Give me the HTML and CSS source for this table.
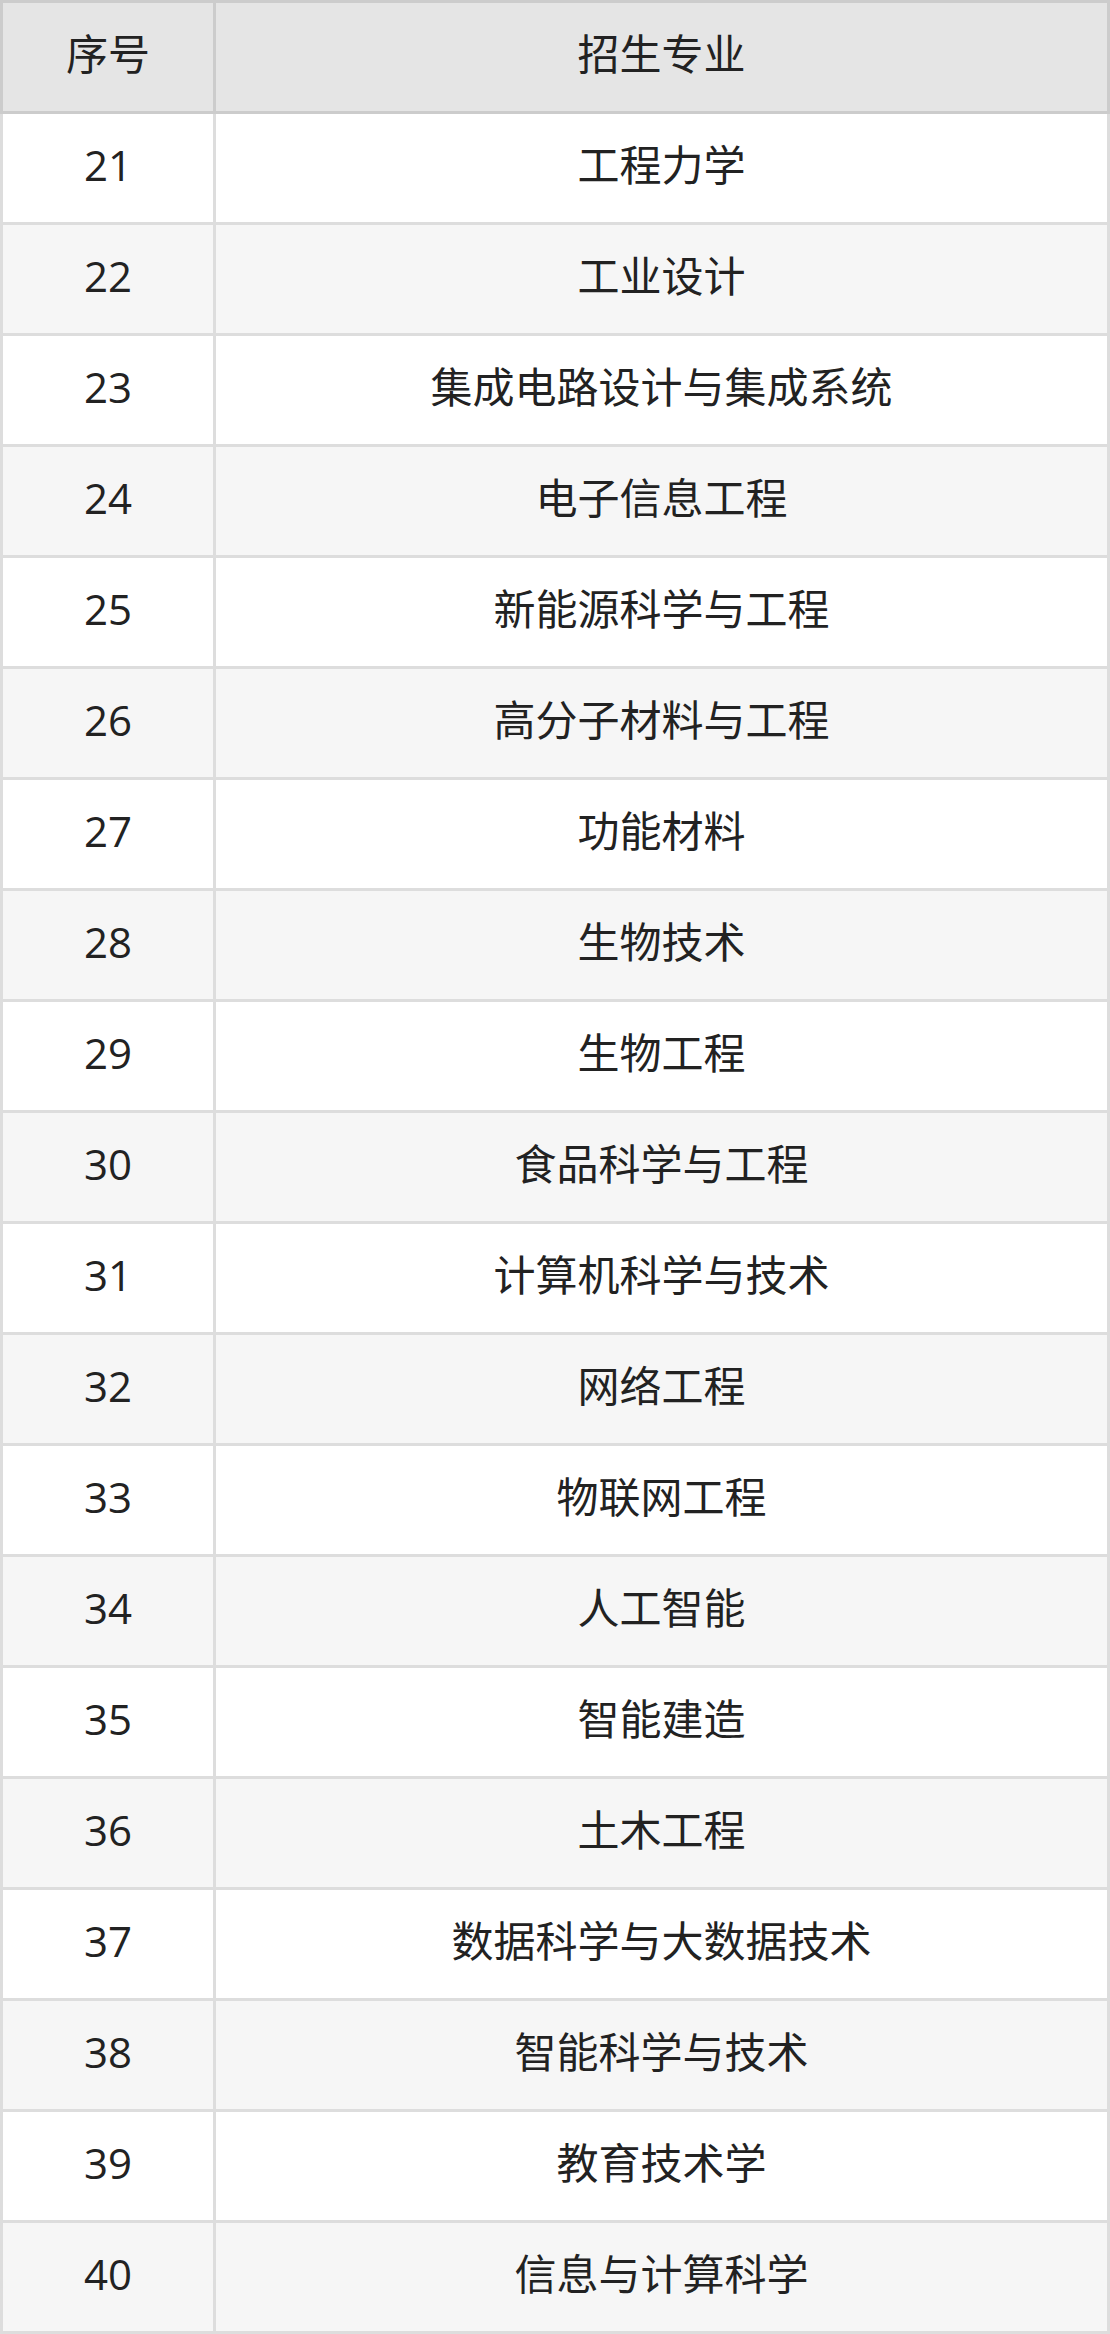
FILE: index.html
```html
<!DOCTYPE html>
<html lang="zh-CN">
<head>
<meta charset="utf-8">
<title>招生专业</title>
<link rel="stylesheet" href="styles.css">
</head>
<body>
<table class="majors">
<colgroup><col class="col-no"><col class="col-name"></colgroup>
<thead>
<tr><th>序号</th><th>招生专业</th></tr>
</thead>
<tbody>
<tr><td>21</td><td>工程力学</td></tr>
<tr><td>22</td><td>工业设计</td></tr>
<tr><td>23</td><td>集成电路设计与集成系统</td></tr>
<tr><td>24</td><td>电子信息工程</td></tr>
<tr><td>25</td><td>新能源科学与工程</td></tr>
<tr><td>26</td><td>高分子材料与工程</td></tr>
<tr><td>27</td><td>功能材料</td></tr>
<tr><td>28</td><td>生物技术</td></tr>
<tr><td>29</td><td>生物工程</td></tr>
<tr><td>30</td><td>食品科学与工程</td></tr>
<tr><td>31</td><td>计算机科学与技术</td></tr>
<tr><td>32</td><td>网络工程</td></tr>
<tr><td>33</td><td>物联网工程</td></tr>
<tr><td>34</td><td>人工智能</td></tr>
<tr><td>35</td><td>智能建造</td></tr>
<tr><td>36</td><td>土木工程</td></tr>
<tr><td>37</td><td>数据科学与大数据技术</td></tr>
<tr><td>38</td><td>智能科学与技术</td></tr>
<tr><td>39</td><td>教育技术学</td></tr>
<tr><td>40</td><td>信息与计算科学</td></tr>
</tbody>
</table>
</body>
</html>
```
FILE: styles.css
```css
html, body {
  margin: 0;
  padding: 0;
  background: #ffffff;
}
.majors {
  width: 1110px;
  border-collapse: collapse;
  table-layout: fixed;
  font-family: "Open Sans", "Noto Sans CJK SC", sans-serif;
  font-size: 42px;
  color: #222222;
}
.col-no { width: 213px; }
.majors tr { height: 111px; }
.majors th,
.majors td {
  padding: 0 0 6px 0;
  text-align: center;
  vertical-align: middle;
  line-height: 1.2;
}
.majors th {
  font-weight: normal;
  background: #e5e5e5;
  border: 3px solid #cccccc;
}
.majors td {
  border: 3px solid #dddddd;
}
.majors tbody tr:nth-child(even) td {
  background: #f6f6f6;
}
```
